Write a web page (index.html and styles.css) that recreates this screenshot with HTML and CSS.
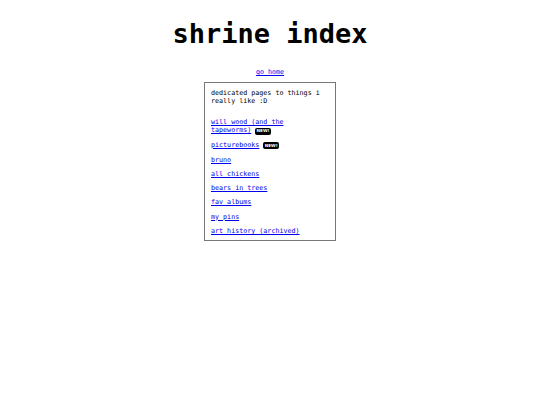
FILE: index.html
```html
<!DOCTYPE html>
<html>
<head>
<meta charset="utf-8">
<title>shrine index</title>
<link rel="stylesheet" href="styles.css">
</head>
<body>
<h1 class="title">shrine index</h1>
<p class="home"><a href="#">go home</a></p>
<div class="box">
  <p class="intro">dedicated pages to things i really like :D</p>
  <ul class="list">
    <li><a href="#">will wood (and the tapeworms)</a> <span class="badge">NEW!</span></li>
    <li><a href="#">picturebooks</a> <span class="badge">NEW!</span></li>
    <li><a href="#">bruno</a></li>
    <li><a href="#">all chickens</a></li>
    <li><a href="#">bears in trees</a></li>
    <li><a href="#">fav albums</a></li>
    <li><a href="#">my pins</a></li>
    <li><a href="#">art history (archived)</a></li>
  </ul>
</div>
</body>
</html>
```
FILE: styles.css
```css
html, body {
  margin: 0;
  padding: 0;
  background: #fff;
}
body {
  font-family: "DejaVu Sans Mono", monospace;
  font-size: 6.7px;
  line-height: 8px;
  color: #000;
}
a {
  color: #0000ee;
}
.title {
  margin: 0;
  padding-top: 18px;
  font-size: 27px;
  line-height: 32px;
  font-weight: bold;
  text-align: center;
}
.home {
  margin: 18px 0 0;
  text-align: center;
}
.box {
  width: 118px;
  margin: 6px auto 0;
  border: 1px solid #777;
  padding: 6px 6px 5px;
}
.intro {
  margin: 0;
}
.list {
  list-style: none;
  margin: 13px 0 0;
  padding: 0 6px 0 0;
  display: flex;
  flex-direction: column;
  gap: 6.3px;
}
.list li {
  height: auto;
}
.badge {
  display: inline-block;
  background: #000;
  color: #fff;
  font-family: "DejaVu Sans", sans-serif;
  font-weight: bold;
  font-size: 4.2px;
  line-height: 6px;
  padding: 0.5px 1.3px;
  border-radius: 2px;
  vertical-align: 0;
}
```
